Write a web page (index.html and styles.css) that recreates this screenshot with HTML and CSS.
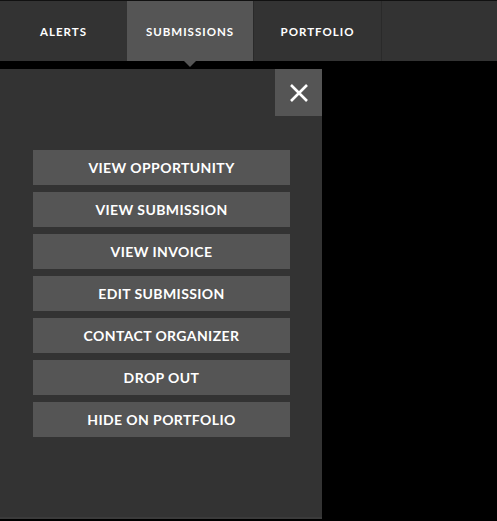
FILE: index.html
```html
<!DOCTYPE html>
<html lang="en">

<head>
    <meta charset="UTF-8">
    <meta name="viewport" content="width=device-width, initial-scale=1.0">
    <title>Submissions</title>
    <link rel="stylesheet" href="styles.css">
</head>

<body>
    <nav class="tabs">
        <a class="tab">Alerts</a>
        <a class="tab active">Submissions</a>
        <a class="tab">Portfolio</a>
        <a class="tab"></a>
    </nav>

    <div class="panel">
        <div class="panel-top">
            <button class="close" aria-label="Close">
                <svg width="20" height="20" viewBox="0 0 20 20">
                    <path d="M2 2 L18 18 M18 2 L2 18" stroke="#fff" stroke-width="2.6" fill="none" />
                </svg>
            </button>
        </div>
        <div class="actions">
            <button class="action">View Opportunity</button>
            <button class="action">View Submission</button>
            <button class="action">View Invoice</button>
            <button class="action">Edit Submission</button>
            <button class="action">Contact Organizer</button>
            <button class="action">Drop Out</button>
            <button class="action">Hide on Portfolio</button>
        </div>
    </div>
</body>

</html>
```

FILE: styles.css
```css
* {
    margin: 0;
    padding: 0;
    box-sizing: border-box;
}

body {
    background-color: #000;
    font-family: Lato, "Open Sans", sans-serif;
}

.tabs {
    display: grid;
    grid-template-columns: 127px 126px 128px 1fr;
    height: 61px;
    border-top: 1px solid #111;
    background-color: #333;
}

.tab {
    display: flex;
    justify-content: center;
    align-items: center;
    position: relative;
    color: #fff;
    font-size: 11.5px;
    font-weight: bold;
    letter-spacing: 1px;
    text-transform: uppercase;
    border-left: 1px solid #2a2a2a;
}

.tab:first-child {
    border-left: none;
}

.tab.active {
    background-color: #555;
    border-left: none;
}

.tab.active::after {
    content: "";
    position: absolute;
    left: 50%;
    bottom: -6px;
    margin-left: -6px;
    border-left: 6px solid transparent;
    border-right: 6px solid transparent;
    border-top: 6px solid #555;
}

.panel {
    width: 322px;
    height: 450px;
    margin-top: 8px;
    background-color: #333;
    border-bottom: 2px solid #3b3b3b;
}

.panel-top {
    display: flex;
    justify-content: flex-end;
}

.close {
    display: flex;
    justify-content: center;
    align-items: center;
    width: 47px;
    height: 47px;
    border: none;
    background-color: #555;
    cursor: pointer;
}

.actions {
    display: flex;
    flex-direction: column;
    gap: 7px;
    width: 257px;
    margin: 34px 0 0 33px;
}

.action {
    height: 35px;
    border: none;
    background-color: #555;
    color: #fff;
    font-family: Lato, "Open Sans", sans-serif;
    font-size: 14px;
    font-weight: bold;
    letter-spacing: 0.4px;
    text-transform: uppercase;
    cursor: pointer;
}
```
